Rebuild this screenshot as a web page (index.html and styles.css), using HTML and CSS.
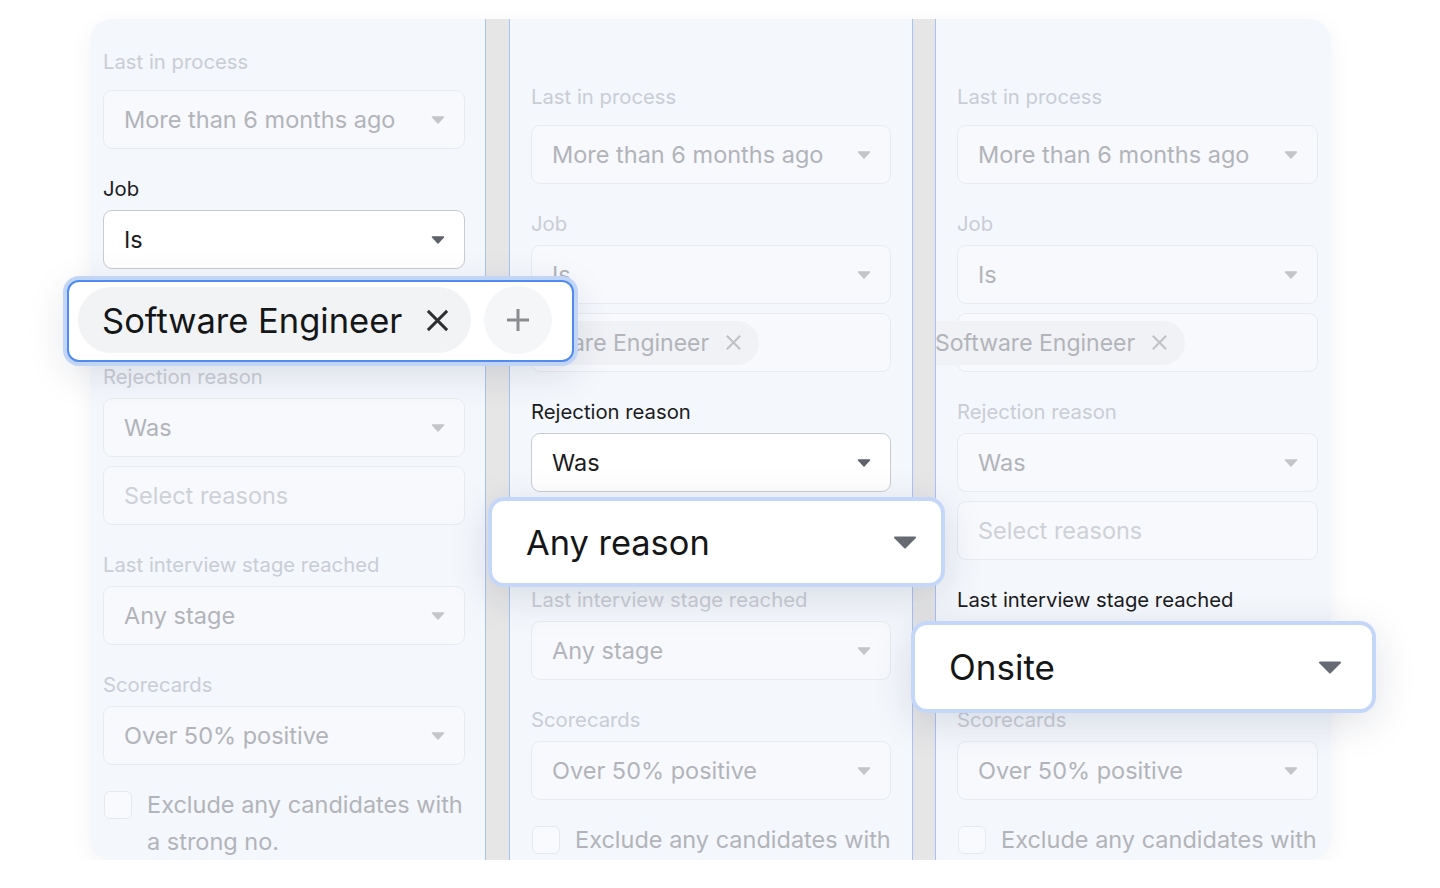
FILE: index.html
```html
<!DOCTYPE html>
<html lang="en">
<head>
  <meta charset="UTF-8">
  <title>Candidate filters</title>
  <link rel="stylesheet" href="styles.css">
</head>
<body>
  <div class="stage">
    <div class="board">

      <!-- step 1: job -->
      <div class="col col-first">
        <div class="field">
          <div class="label label-top">Last in process</div>
          <div class="select">More than 6 months ago <svg class="caret" viewBox="0 0 14 8"><path d="M1.5 1h11L7 7z"/></svg></div>
        </div>
        <div class="field">
          <div class="label on">Job</div>
          <div class="select on">Is <svg class="caret" viewBox="0 0 14 8"><path d="M1.5 1h11L7 7z"/></svg></div>
          <div class="tagbox"></div>
        </div>
        <div class="field">
          <div class="label">Rejection reason</div>
          <div class="select">Was <svg class="caret" viewBox="0 0 14 8"><path d="M1.5 1h11L7 7z"/></svg></div>
          <div class="tagbox placeholder">Select reasons</div>
        </div>
        <div class="field">
          <div class="label">Last interview stage reached</div>
          <div class="select">Any stage <svg class="caret" viewBox="0 0 14 8"><path d="M1.5 1h11L7 7z"/></svg></div>
        </div>
        <div class="field">
          <div class="label">Scorecards</div>
          <div class="select">Over 50% positive <svg class="caret" viewBox="0 0 14 8"><path d="M1.5 1h11L7 7z"/></svg></div>
        </div>
        <div class="check">
          <span class="box"></span>
          <span>Exclude any candidates with a strong no.</span>
        </div>
      </div>

      <div class="divider"></div>

      <!-- step 2: rejection reason -->
      <div class="col col-mid">
        <div class="field">
          <div class="label label-top">Last in process</div>
          <div class="select">More than 6 months ago <svg class="caret" viewBox="0 0 14 8"><path d="M1.5 1h11L7 7z"/></svg></div>
        </div>
        <div class="field">
          <div class="label">Job</div>
          <div class="select">Is <svg class="caret" viewBox="0 0 14 8"><path d="M1.5 1h11L7 7z"/></svg></div>
          <div class="tagbox">
            <span class="chip">Software Engineer <svg class="x" viewBox="0 0 20 20"><path d="M3 3l14 14M17 3L3 17"/></svg></span>
          </div>
        </div>
        <div class="field">
          <div class="label on">Rejection reason</div>
          <div class="select on">Was <svg class="caret" viewBox="0 0 14 8"><path d="M1.5 1h11L7 7z"/></svg></div>
          <div class="tagbox placeholder">Select reasons</div>
        </div>
        <div class="field">
          <div class="label">Last interview stage reached</div>
          <div class="select">Any stage <svg class="caret" viewBox="0 0 14 8"><path d="M1.5 1h11L7 7z"/></svg></div>
        </div>
        <div class="field">
          <div class="label">Scorecards</div>
          <div class="select">Over 50% positive <svg class="caret" viewBox="0 0 14 8"><path d="M1.5 1h11L7 7z"/></svg></div>
        </div>
        <div class="check">
          <span class="box"></span>
          <span>Exclude any candidates with a strong no.</span>
        </div>
      </div>

      <div class="divider divider-narrow"></div>

      <!-- step 3: interview stage -->
      <div class="col col-last">
        <div class="field">
          <div class="label label-top">Last in process</div>
          <div class="select">More than 6 months ago <svg class="caret" viewBox="0 0 14 8"><path d="M1.5 1h11L7 7z"/></svg></div>
        </div>
        <div class="field">
          <div class="label">Job</div>
          <div class="select">Is <svg class="caret" viewBox="0 0 14 8"><path d="M1.5 1h11L7 7z"/></svg></div>
          <div class="tagbox">
            <span class="chip">Software Engineer <svg class="x" viewBox="0 0 20 20"><path d="M3 3l14 14M17 3L3 17"/></svg></span>
          </div>
        </div>
        <div class="field">
          <div class="label">Rejection reason</div>
          <div class="select">Was <svg class="caret" viewBox="0 0 14 8"><path d="M1.5 1h11L7 7z"/></svg></div>
          <div class="tagbox placeholder">Select reasons</div>
        </div>
        <div class="field">
          <div class="label on">Last interview stage reached</div>
          <div class="select">Any stage <svg class="caret" viewBox="0 0 14 8"><path d="M1.5 1h11L7 7z"/></svg></div>
        </div>
        <div class="field">
          <div class="label">Scorecards</div>
          <div class="select">Over 50% positive <svg class="caret" viewBox="0 0 14 8"><path d="M1.5 1h11L7 7z"/></svg></div>
        </div>
        <div class="check">
          <span class="box"></span>
          <span>Exclude any candidates with a strong no.</span>
        </div>
      </div>
    </div>

    <!-- zoomed-in callouts -->
    <div class="pop pop-job">
      <span class="big-chip">Software Engineer <svg class="big-x" viewBox="0 0 26 26"><path d="M3 3l20 20M23 3L3 23"/></svg></span>
      <span class="add"><svg viewBox="0 0 26 26"><path d="M13 2v22M2 13h22"/></svg></span>
    </div>
    <div class="pop pop-reason">Any reason <svg class="big-caret" viewBox="0 0 24 13"><path d="M2 1.5h20L12 11.5z"/></svg></div>
    <div class="pop pop-stage">Onsite <svg class="big-caret" viewBox="0 0 24 13"><path d="M2 1.5h20L12 11.5z"/></svg></div>
  </div>
</body>
</html>
```

FILE: styles.css
```css
body {
  margin: 0;
  background: #fff;
  font-family: Inter, "Noto Sans", sans-serif;
  color: #1b1c1e;
}
.stage {
  position: relative;
  width: 1241px;
  height: 841px;
  margin: 19px 0 0 90px;
}
.board {
  display: flex;
  height: 100%;
  background: #f4f7fc;
  border-radius: 22px;
  overflow: hidden;
  box-shadow: 0 6px 24px rgba(30, 40, 70, 0.05);
}
.col {
  box-sizing: border-box;
  overflow: hidden;
  padding-top: 31px;
}
.col-first {
  width: 395px;
  padding-left: 13px;
  padding-right: 20px;
}
.col-mid {
  width: 402px;
  padding: 66px 21px 0 21px;
}
.col-last {
  width: 395px;
  padding: 66px 13px 0 21px;
}
.divider {
  box-sizing: border-box;
  width: 25px;
  flex: none;
  background: #e6e6e7;
  border-left: 1px solid #a8c3f2;
  border-right: 1px solid #a8c3f2;
}
.divider-narrow {
  width: 24px;
}
.field {
  margin-bottom: 28px;
}
.label {
  font-size: 20.3px;
  line-height: 24px;
  margin-bottom: 9px;
  color: #c9cdd5;
}
.label-top {
  margin-bottom: 16px;
}
.label.on {
  color: #1b1c1e;
}
.select, .tagbox {
  box-sizing: border-box;
  height: 59px;
  display: flex;
  align-items: center;
  justify-content: space-between;
  padding: 0 19px 0 20px;
  border: 1px solid #e8ebf0;
  border-radius: 9px;
  background: #f7f9fd;
  font-size: 23.5px;
  color: #b2b4b9;
  white-space: nowrap;
}
.select.on {
  background: #fff;
  border: 1.5px solid #c9cbd0;
  color: #1b1c1e;
}
.caret {
  width: 14px;
  height: 8px;
  fill: #c3c5c9;
  stroke: #c3c5c9;
  stroke-width: 1.5;
  stroke-linejoin: round;
}
.select.on .caret {
  fill: #5f626a;
  stroke: #5f626a;
}
.tagbox {
  margin-top: 9px;
  justify-content: flex-start;
  padding: 0;
}
.tagbox.placeholder {
  padding-left: 20px;
  color: #ced1d6;
}
.chip {
  display: flex;
  align-items: center;
  gap: 15px;
  height: 44px;
  margin-left: -49px;
  padding: 0 16px 0 26px;
  border-radius: 22px;
  background: #f0f2f6;
  font-size: 23px;
}
.x {
  width: 19px;
  height: 19px;
  stroke: #c0c2c6;
  stroke-width: 2.2;
  fill: none;
}
.check {
  display: flex;
  align-items: flex-start;
  gap: 15px;
  margin-top: -7px;
  font-size: 23.5px;
  line-height: 37px;
  color: #b2b4b9;
}
.box {
  flex: none;
  width: 28px;
  height: 28px;
  margin: 5px 0 0 1px;
  box-sizing: border-box;
  border: 1px solid #e6e9ee;
  border-radius: 6px;
  background: #f8fafd;
}

/* callouts */
.pop {
  position: absolute;
  box-sizing: border-box;
  display: flex;
  align-items: center;
  background: #fff;
  font-size: 34.4px;
  color: #151617;
  box-shadow: 0 10px 40px rgba(20, 30, 60, 0.13);
}
.pop-job {
  left: -23px;
  top: 261px;
  width: 507px;
  height: 82px;
  padding: 0 9px 2px;
  gap: 13px;
  border: 2px solid #4f8bf0;
  border-radius: 12px;
  box-shadow: 0 0 0 4px #c2d5f7, 0 10px 40px rgba(20, 30, 60, 0.13);
}
.big-chip {
  display: flex;
  align-items: center;
  gap: 23px;
  height: 66px;
  padding: 0 21px 0 24px;
  border-radius: 33px;
  background: #f2f3f5;
  font-size: 34.5px;
}
.big-x {
  width: 25px;
  height: 25px;
  stroke: #2e2f31;
  stroke-width: 3;
  fill: none;
}
.add {
  display: flex;
  align-items: center;
  justify-content: center;
  width: 68px;
  height: 68px;
  border-radius: 50%;
  background: #f5f6f8;
}
.add svg {
  width: 26px;
  height: 26px;
  stroke: #8b8c8f;
  stroke-width: 3;
  fill: none;
}
.pop-reason, .pop-stage {
  justify-content: space-between;
  padding: 0 24px 0 34px;
  border: 4px solid #c5d7f8;
  border-radius: 16px;
}
.pop-reason {
  left: 398px;
  top: 478px;
  width: 457px;
  height: 90px;
}
.pop-stage {
  left: 821px;
  top: 602px;
  width: 465px;
  height: 92px;
  padding-right: 30px;
  font-size: 35px;
}
.big-caret {
  width: 24px;
  height: 13px;
  fill: #676a72;
  stroke: #676a72;
  stroke-width: 2;
  stroke-linejoin: round;
}
```
